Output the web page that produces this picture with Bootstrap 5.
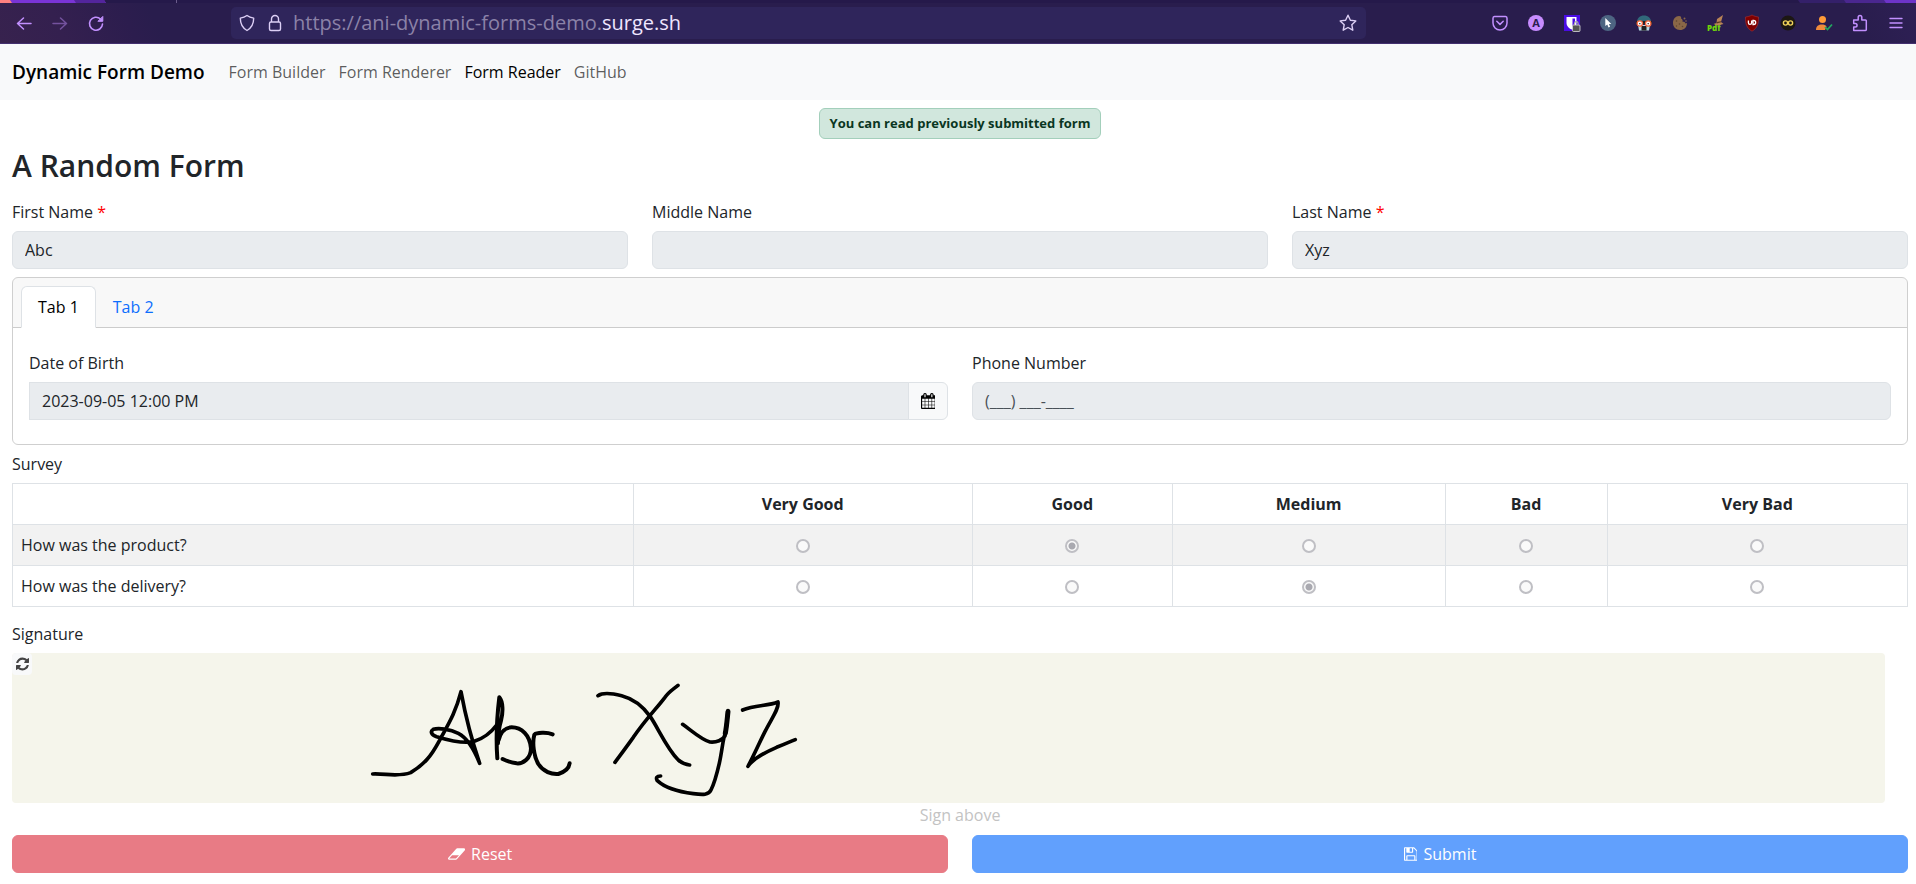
<!DOCTYPE html>
<html lang="en">
<head>
<meta charset="utf-8">
<meta name="viewport" content="width=device-width, initial-scale=1">
<title>Dynamic Form Demo</title>
<link href="https://cdn.jsdelivr.net/npm/bootstrap@5.3.0/dist/css/bootstrap.min.css" rel="stylesheet">
<style>
  body { font-family: "Open Sans", "Noto Sans", sans-serif; line-height: 24px; }

  /* Browser toolbar */
  .browser-bar {
    height: 44px; padding-top: 7px; border-bottom: 1px solid #43306f;
    background: linear-gradient(65deg, #37224e 0, #34204f 60px, #2c1d4e 125px, #291d4d 150px, #291d4d calc(100% - 60px), #2e2055 100%);
    position: relative;
  }
  .tab-strip { position: absolute; inset: 0 0 auto 0; width: 100%; height: 3px; }
  .tool-btn { width: 36px; height: 32px; padding: 0; border: 0; background: none; color: #c290ff; display: flex; align-items: center; justify-content: center; }
  .tool-btn:disabled { opacity: .45; }
  .tool-btn svg { width: 20px; height: 20px; }
  .nav-tools { padding-left: 6px; width: 231px; }
  .url-box { background: #2f255b; border-radius: 5px; height: 32px; color: #dccff5; flex: 1 1 auto; padding-left: 2px; }
  .url-icon { width: 20px; height: 20px; margin: 0 4px; }
  .url-text { font-size: 20px; color: #8b82a8; margin-left: 4px; white-space: nowrap; outline: 0; }
  .url-text b { font-weight: 400; color: #efe6ff; }
  .ext-tools { padding-left: 116px; padding-right: 2px; }

  /* Page */
  .page-nav { padding-left: 12px; height: 56px; }
  .page-nav .navbar-brand { font-weight: 600; font-size: 19px; margin-right: 24px; }
  .page-nav .navbar-nav { gap: 13px; }
  .page-body { padding: 8px 8px 0 12px; }
  .notice { font-size: 13px; line-height: 21px; font-weight: 700; padding: 4px 10px; color: #0a3622; }
  .form-title { font-size: 30px; line-height: 38px; font-weight: 600; }
  .field-label { padding: 7px 0; display: block; }
  .required-mark { color: #f00; }
  .form-control:disabled { background: #e9ecef; }
  .cal-btn { width: 40px; border-color: #dee2e6; }
  .phone-input::placeholder { color: #495057; }
  .card { border-color: #cfcfcf; }
  .date-input { border-radius: 0; }
  .survey-table { table-layout: fixed; }
  .survey-table col:nth-child(1) { width: 32.75%; }
  .survey-table col:nth-child(2) { width: 17.9%; }
  .survey-table col:nth-child(3) { width: 10.55%; }
  .survey-table col:nth-child(4) { width: 14.4%; }
  .survey-table col:nth-child(5) { width: 8.55%; }
  .survey-radio {
    appearance: none; width: 14px; height: 14px; margin: 0; vertical-align: -2px;
    border: 2px solid #bfbfc4; border-radius: 50%; background: #fafafa;
  }
  .survey-radio:checked { background: radial-gradient(circle, #a9a9b0 3px, #fafafa 4px); }
  .sign-pad { position: relative; height: 150px; margin-right: 23px; background: #f5f5eb; border-radius: 4px; overflow: hidden; }
  .sign-pad .ink { display: block; width: 900px; height: 150px; }
  .clear-btn { position: absolute; top: 0; left: 0; width: 20px; height: 22px; padding: 0; border: 0; border-radius: 4px; background: #f8f9fa; color: #444; display: flex; align-items: center; justify-content: center; }
  .sign-hint { color: #c3c3c3; }
  .fa-glyph { height: 16px; fill: currentColor; vertical-align: -2px; }
  .w-100 > .fa-glyph { margin-right: 2px; }
</style>
</head>
<body>
<header class="browser-bar d-flex align-items-start">
  <svg class="tab-strip" viewBox="0 0 1916 4" preserveAspectRatio="none" aria-hidden="true">
    <path fill="#25194a" d="M0 0H1916V4H0Z"/>
    <path fill="#7a34d6" d="M0 0H104L106 4H0Z"/>
    <path fill="#53259c" d="M74 0H104L106 4H76Z"/>
    <path fill="#ff8080" d="M0 0H10L12 4H0Z"/>
    <path fill="#6b5c8c" d="M176 0h1v4h-1z"/>
    <path fill="#34206a" d="M1798 0H1846V4H1800Z"/>
    <path fill="#4a278f" d="M1844 0H1886V4H1846Z"/>
    <path fill="#6d34c8" d="M1884 0H1916V4H1886Z"/>
  </svg>
  <div class="nav-tools d-flex flex-shrink-0">
    <button class="tool-btn" aria-label="Back"><svg viewBox="0 0 20 20" fill="none" stroke="currentColor" stroke-width="1.5" stroke-linecap="round" stroke-linejoin="round"><path d="M17 10.500H3.500M9.500 5 3.500 10.500l6 5.500"/></svg></button>
    <button class="tool-btn" aria-label="Forward" disabled><svg viewBox="0 0 20 20" fill="none" stroke="currentColor" stroke-width="1.500" stroke-linecap="round" stroke-linejoin="round"><path d="M3 10.500H16.500M10.500 5l6 5.500-6 5.500"/></svg></button>
    <button class="tool-btn" aria-label="Reload"><svg viewBox="0 0 20 20" fill="none" stroke="currentColor" stroke-width="1.600" stroke-linecap="round" stroke-linejoin="round"><path d="M14.500 6A6.500 6.500 0 1 0 16.500 11"/><path fill="currentColor" stroke-width="1" d="M16.800 3.800v4.500h-4.500Z"/></svg></button>
  </div>
  <div class="url-box d-flex align-items-center">
    <svg class="url-icon" viewBox="0 0 20 20" fill="none" stroke="currentColor" stroke-width="1.400" stroke-linejoin="round"><path d="M10 2.500c2 1.500 4 2.200 6.700 2.600 0 6-1.700 9.700-6.700 12.400C5 14.800 3.300 11 3.300 5.100 6 4.700 8 4 10 2.500Z"/></svg>
    <svg class="url-icon" viewBox="0 0 20 20" fill="none" stroke="currentColor" stroke-width="1.400" stroke-linejoin="round"><rect x="4.500" y="9" width="11" height="8.500" rx="1.500"/><path d="M6.500 9V6a3.500 3.500 0 0 1 7 0v3"/></svg>
    <div class="url-text" role="textbox" aria-label="Address">https://ani-dynamic-forms-demo.<b>surge.sh</b></div>
    <button class="tool-btn ms-auto text-reset" aria-label="Bookmark"><svg viewBox="0 0 20 20" fill="none" stroke="currentColor" stroke-width="1.400" stroke-linejoin="round"><path d="m10 2.200 2.400 5 5.400.7-4 3.800 1 5.500L10 14.500l-4.800 2.700 1-5.500-4-3.800 5.400-.7Z"/></svg></button>
  </div>
  <div class="ext-tools d-flex flex-shrink-0">
    <button class="tool-btn" aria-label="Pocket"><svg viewBox="0 0 20 20" fill="none" stroke="currentColor" stroke-width="1.500" stroke-linecap="round" stroke-linejoin="round"><path d="M4.500 3.500h11A1.800 1.800 0 0 1 17 5.300V10a7 7 0 0 1-14 0V5.300A1.800 1.800 0 0 1 4.500 3.500ZM6.800 8.300 10 11.400l3.200-3.100"/></svg></button>
    <button class="tool-btn" aria-label="Account"><svg viewBox="0 0 20 20"><circle cx="10" cy="10" r="8" fill="#c78cff"/><text x="10" y="14" text-anchor="middle" font-size="11" font-weight="700" fill="#2b1d4e">A</text></svg></button>
    <button class="tool-btn" aria-label="Password manager"><svg viewBox="0 0 20 20"><path fill="#4a0ce6" d="M2 2h16v16H2z"/><path fill="#fff" d="M4.500 4h10v6c0 3-2.500 5.500-5 6.500-2.500-1-5-3.500-5-6.500Z"/><path fill="#4a0ce6" d="M10.500 5.500H13v5c0 1.500-1 2.500-2.500 3.500Z"/><rect x="10.500" y="12" width="7.500" height="6.500" rx="1" fill="#555" stroke="#ddd" stroke-width=".8"/><path d="M12.500 12v-1.500a1.800 1.800 0 0 1 3.600 0V12" fill="none" stroke="#aaa" stroke-width="1.200"/></svg></button>
    <button class="tool-btn" aria-label="Pointer"><svg viewBox="0 0 20 20"><circle cx="10" cy="10" r="8" fill="#4d6582"/><path fill="#fff" d="M7.300 5v8l2-1.500 1.200 3 1.600-.7-1.200-2.800h2.400Z"/></svg></button>
    <button class="tool-btn" aria-label="Privacy mask"><svg viewBox="0 0 20 20"><path fill="#31697a" d="M3 9c0-4 3-6.500 7-6.500S17 5 17 9Z"/><path fill="#b9dbe4" d="M4 12h12L15 17.500H5Z"/><path fill="#222" d="M7.500 13h5v4.500h-5z"/><path fill="#222" d="M2 8h16v3H2z"/><circle cx="5.800" cy="10.500" r="2.700" fill="#fff" stroke="#f0663f" stroke-width="1.300"/><circle cx="14.200" cy="10.500" r="2.700" fill="#fff" stroke="#f0663f" stroke-width="1.300"/><path fill="#222" d="M5.200 10h1.200v1.200H5.200zM13.600 10h1.200v1.200h-1.200z"/></svg></button>
    <button class="tool-btn" aria-label="Cookies"><svg viewBox="0 0 20 20"><path fill="#8a6747" d="M9 3c2 0 2.500 1 2 2.500 1.500.5 2 2 1.500 3.500 1.500-.5 2.500 0 3 1.500L17 10c0 4.500-3 7-7 7s-7-3-7-7 2.500-7 6-7Z"/><circle cx="14.500" cy="5.500" r="1" fill="#8a6747"/><circle cx="16" cy="8" r=".8" fill="#8a6747"/><g fill="#5f452f"><circle cx="6.500" cy="8" r=".8"/><circle cx="9.500" cy="11" r=".8"/><circle cx="6.500" cy="13" r=".7"/><circle cx="12.500" cy="13.500" r=".8"/></g></svg></button>
    <button class="tool-btn" aria-label="PDF tools"><svg viewBox="0 0 20 20"><text x="1" y="17.500" font-size="8" font-weight="800" fill="#6fd40a">Pdf</text><path fill="#b98456" d="m17 2-6 4-.5 4-3 1 4 1.500 6-1.500-2.500-2Z"/><path fill="#5b3a20" d="m10.500 9 4.300-.8.400 1-4.500 1.200Z"/></svg></button>
    <button class="tool-btn" aria-label="Content blocker"><svg viewBox="0 0 20 20"><path fill="#800000" stroke="#a33" stroke-width=".6" d="M10 2c2 1.200 4.500 1.800 6.500 2 .2 6.500-1 11-6.500 14.200C4.500 15 3.300 10.500 3.500 4 5.500 3.800 8 3.200 10 2Z"/><path d="M6.400 7.500v2.300a1.600 1.600 0 0 0 3.200 0V7.500M11 7.500v4h.7a2 2 0 0 0 0-4Z" fill="none" stroke="#fff" stroke-width="1.300"/></svg></button>
    <button class="tool-btn" aria-label="Infinity"><svg viewBox="0 0 20 20"><circle cx="10" cy="10" r="7.500" fill="#1c1713"/><circle cx="7.500" cy="10" r="2.100" fill="none" stroke="#f1d35a" stroke-width="1.400"/><circle cx="12.500" cy="10" r="2.100" fill="none" stroke="#f1d35a" stroke-width="1.400"/></svg></button>
    <button class="tool-btn" aria-label="User check"><svg viewBox="0 0 20 20"><circle cx="8.500" cy="6.500" r="3.500" fill="#ff9b38"/><path fill="#ef8a3c" d="M2 17c0-4 2.500-5.500 6-5.500 2 0 3.500.5 4.500 2L11 17Z"/><path d="m11 14 2.500 2.500 4.500-5" fill="none" stroke="#22a861" stroke-width="1.700"/></svg></button>
    <button class="tool-btn" aria-label="Extensions"><svg viewBox="0 0 20 20" fill="none" stroke="currentColor" stroke-width="1.500" stroke-linejoin="round"><path d="M3.700 17.500V14h1.600a1.700 1.700 0 0 0 0-3.500H3.700V7h4.500V4.300a1.800 1.800 0 0 1 3.600 0V7h3.700a.8.800 0 0 1 .8.800v8.900a.8.800 0 0 1-.8.800Z"/></svg></button>
    <button class="tool-btn" aria-label="Menu"><svg viewBox="0 0 20 20" fill="none" stroke="currentColor" stroke-width="1.400" stroke-linecap="round"><path d="M4 5.500h12M4 10h12M4 14.500h12"/></svg></button>
  </div>
</header>

<nav class="navbar navbar-expand bg-light page-nav" aria-label="Main">
  <a class="navbar-brand" href="#">Dynamic Form Demo</a>
  <ul class="navbar-nav">
    <li class="nav-item"><a class="nav-link px-0" href="#">Form Builder</a></li>
    <li class="nav-item"><a class="nav-link px-0" href="#">Form Renderer</a></li>
    <li class="nav-item"><a class="nav-link px-0 active" aria-current="page" href="#">Form Reader</a></li>
    <li class="nav-item"><a class="nav-link px-0" href="#">GitHub</a></li>
  </ul>
</nav>

<main class="page-body">
  <div class="d-flex justify-content-center mb-2">
    <div class="alert alert-success notice mb-0" role="alert">You can read previously submitted form</div>
  </div>
  <h2 class="form-title mb-2">A Random Form</h2>

  <form>
    <div class="row mb-2">
      <div class="col">
        <label class="field-label" for="first">First Name <span class="required-mark">*</span></label>
        <input class="form-control" id="first" value="Abc" disabled>
      </div>
      <div class="col">
        <label class="field-label" for="middle">Middle Name</label>
        <input class="form-control" id="middle" disabled>
      </div>
      <div class="col">
        <label class="field-label" for="last">Last Name <span class="required-mark">*</span></label>
        <input class="form-control" id="last" value="Xyz" disabled>
      </div>
    </div>

    <div class="card">
      <div class="card-header">
        <ul class="nav nav-tabs card-header-tabs">
          <li class="nav-item"><a class="nav-link active" href="#">Tab 1</a></li>
          <li class="nav-item"><a class="nav-link" href="#">Tab 2</a></li>
        </ul>
      </div>
      <div class="card-body">
        <div class="row mb-2">
          <div class="col">
            <label class="field-label" for="dob">Date of Birth</label>
            <div class="input-group">
              <input class="form-control date-input" id="dob" value="2023-09-05 12:00 PM" disabled>
              <button class="btn btn-light cal-btn p-0" type="button" aria-label="Open calendar"><svg class="fa-glyph" viewBox="0 0 1664 1792"><path d="M128 1664h288v-288h-288v288zm352 0h320v-288h-320v288zm-352-352h288v-320h-288v320zm352 0h320v-320h-320v320zm-352-384h288v-288h-288v288zm736 736h320v-288h-320v288zm-384-736h320v-288h-320v288zm768 736h288v-288h-288v288zm-384-352h320v-320h-320v320zm-352-864v-288q0-13-9.500-22.500t-22.500-9.500h-64q-13 0-22.500 9.500t-9.500 22.500v288q0 13 9.500 22.500t22.500 9.500h64q13 0 22.500-9.500t9.500-22.500zm736 864h288v-320h-288v320zm-384-384h320v-288h-320v288zm384 0h288v-288h-288v288zm32-480v-288q0-13-9.500-22.500t-22.500-9.500h-64q-13 0-22.500 9.500t-9.500 22.500v288q0 13 9.500 22.500t22.500 9.500h64q13 0 22.500-9.500t9.500-22.500zm384-64v1280q0 52-38 90t-90 38h-1408q-52 0-90-38t-38-90v-1280q0-52 38-90t90-38h128v-96q0-66 47-113t113-47h64q66 0 113 47t47 113v96h384v-96q0-66 47-113t113-47h64q66 0 113 47t47 113v96h128q52 0 90 38t38 90z"/></svg></button>
            </div>
          </div>
          <div class="col">
            <label class="field-label" for="phone">Phone Number</label>
            <input class="form-control phone-input" id="phone" placeholder="(___) ___-____" disabled>
          </div>
        </div>
      </div>
    </div>

    <div class="field-label">Survey</div>
    <table class="table table-bordered table-striped survey-table mb-2">
      <colgroup><col><col><col><col><col><col></colgroup>
      <thead>
        <tr class="text-center"><td></td><th scope="col">Very Good</th><th scope="col">Good</th><th scope="col">Medium</th><th scope="col">Bad</th><th scope="col">Very Bad</th></tr>
      </thead>
      <tbody class="text-center">
        <tr>
          <th class="fw-normal text-start" scope="row">How was the product?</th>
          <td><input class="survey-radio" type="radio" name="product" aria-label="Very Good" disabled></td>
          <td><input class="survey-radio" type="radio" name="product" aria-label="Good" checked disabled></td>
          <td><input class="survey-radio" type="radio" name="product" aria-label="Medium" disabled></td>
          <td><input class="survey-radio" type="radio" name="product" aria-label="Bad" disabled></td>
          <td><input class="survey-radio" type="radio" name="product" aria-label="Very Bad" disabled></td>
        </tr>
        <tr>
          <th class="fw-normal text-start" scope="row">How was the delivery?</th>
          <td><input class="survey-radio" type="radio" name="delivery" aria-label="Very Good" disabled></td>
          <td><input class="survey-radio" type="radio" name="delivery" aria-label="Good" disabled></td>
          <td><input class="survey-radio" type="radio" name="delivery" aria-label="Medium" checked disabled></td>
          <td><input class="survey-radio" type="radio" name="delivery" aria-label="Bad" disabled></td>
          <td><input class="survey-radio" type="radio" name="delivery" aria-label="Very Bad" disabled></td>
        </tr>
      </tbody>
    </table>

    <div class="field-label">Signature</div>
    <div class="sign-pad">
      <svg class="ink" viewBox="0 0 900 150" role="img" aria-label="Handwritten signature">
        <g transform="translate(338 7) scale(.3333)" fill="none" stroke="#000" stroke-width="11" stroke-linecap="round" stroke-linejoin="round">
          <path d="M68 342C105 340 145 352 182 338C225 312 245 285 265 248C290 200 315 165 333 95C345 160 365 240 389 310C375 275 355 235 325 220C300 207 265 203 250 208C240 214 243 224 260 230C300 242 350 252 375 243C400 235 425 215 440 195"/>
          <path stroke-width="12" d="M442 295C438 240 441 170 448 112C459 125 460 155 453 182C446 205 444 225 444 250M446 240C452 215 468 202 485 202C515 202 540 225 543 265C543 295 520 312 500 310C485 308 470 303 458 297M608 223C590 216 560 218 553 224C546 250 552 290 565 312C580 335 605 344 625 342C645 336 657 325 659 310"/>
          <path d="M744 107C760 96 790 101 815 107C850 116 880 140 901 170C925 205 950 265 985 300C997 310 1008 314 1019 315M984 76C960 95 955 97 945 112C920 145 885 180 850 232C830 260 815 280 795 307"/>
          <path d="M998 193C1025 212 1055 240 1080 246C1100 248 1118 240 1125 228C1130 200 1132 175 1134 152M1128 215C1120 225 1117 270 1108 310C1100 345 1088 380 1083 390C1076 405 1060 405 1030 401C990 396 950 388 922 362C917 354 920 348 932 348"/>
          <path stroke-width="15" d="M1134 155C1131 185 1130 200 1126 220"/>
          <path d="M1178 150C1215 135 1255 138 1284 126C1288 145 1265 175 1245 215C1225 255 1210 290 1194 319C1210 295 1250 275 1280 262C1300 254 1320 246 1336 239"/>
        </g>
      </svg>
      <button class="clear-btn" type="button" aria-label="Clear signature"><svg class="fa-glyph" viewBox="0 0 1536 1792" width="13"><path d="M1511 1056q0 5-1 7-64 268-268 434.500t-478 166.500q-146 0-282.500-55t-243.500-157l-129 129q-19 19-45 19t-45-19-19-45v-448q0-26 19-45t45-19h448q26 0 45 19t19 45-19 45l-137 137q71 66 161 102t187 36q134 0 250-65t186-179q11-17 53-117 8-23 30-23h192q13 0 22.500 9.500t9.500 22.500zM1536 256v448q0 26-19 45t-45 19h-448q-26 0-45-19t-19-45 19-45l138-138q-148-137-349-137-134 0-250 65t-186 179q-11 17-53 117-8 23-30 23h-199q-13 0-22.500-9.500t-9.500-22.500v-7q65-268 270-434.500t480-166.500q146 0 284 55.500t245 156.500l130-129q19-19 45-19t45 19 19 45z"/></svg></button>
    </div>
    <div class="text-center sign-hint mb-2">Sign above</div>

    <div class="row">
      <div class="col">
        <button class="btn btn-danger w-100" type="reset" disabled><svg class="fa-glyph" viewBox="0 0 1920 1792"><path d="M896 1408l336-384h-768l-336 384h768zm1013-1077q15 34 9.500 71.500t-30.500 65.500l-896 1024q-38 44-96 44h-768q-38 0-69.500-20.500t-47.500-54.500q-15-34-9.500-71.500t30.500-65.500l896-1024q38-44 96-44h768q38 0 69.500 20.500t47.500 54.500z"/></svg> Reset</button>
      </div>
      <div class="col">
        <button class="btn btn-primary w-100" type="submit" disabled><svg class="fa-glyph" viewBox="0 0 1536 1792"><path d="M384 1536h768v-384h-768v384zM1280 1536h128v-896q0-14-10-38.500t-20-34.500l-281-281q-10-10-34-20t-39-10v416q0 40-28 68t-68 28h-576q-40 0-68-28t-28-68v-416h-128v1280h128v-416q0-40 28-68t68-28h832q40 0 68 28t28 68v416zM896 608v-320q0-13-9.500-22.500t-22.500-9.500h-192q-13 0-22.500 9.500t-9.500 22.500v320q0 13 9.500 22.500t22.500 9.500h192q13 0 22.500-9.500t9.500-22.500zM1536 640v928q0 40-28 68t-68 28h-1344q-40 0-68-28t-28-68v-1344q0-40 28-68t68-28h928q40 0 88 20t76 48l280 280q28 28 48 76t20 88z"/></svg> Submit</button>
      </div>
    </div>
  </form>
</main>
<script src="https://cdn.jsdelivr.net/npm/bootstrap@5.3.0/dist/js/bootstrap.bundle.min.js"></script>
</body>
</html>
